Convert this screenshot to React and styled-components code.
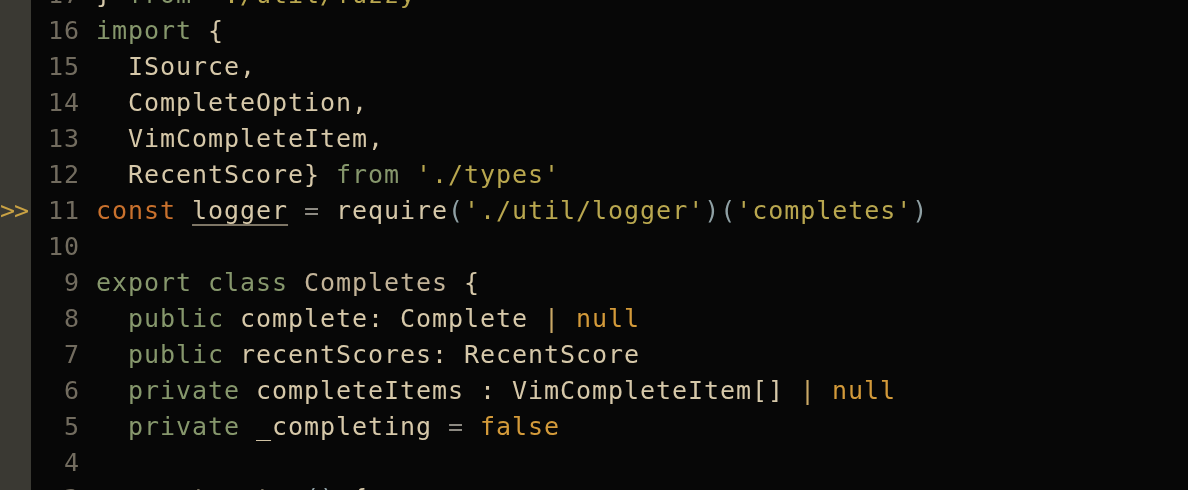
import React from 'react'
import styled, {createGlobalStyle} from 'styled-components'

const GlobalStyle = createGlobalStyle`
  html, body {
    margin: 0;
    padding: 0;
    background: #070707;
  }
  body {
    width: 1188px;
    height: 490px;
    overflow: hidden;
  }
`

const Editor = styled.main`
  display: flex;
  flex-direction: column;
  margin-top: -23px;
  font-family: "DejaVu Sans Mono", "Liberation Mono", monospace;
  font-size: 25px;
  letter-spacing: 0.95px;
  filter: blur(0.45px);
`

const Line = styled.div`
  display: flex;
  flex-direction: row;
  height: 36px;
  line-height: 36px;
`

const SignColumn = styled.div`
  flex: 0 0 31px;
  background: #3a3933;
  color: #c9a244;
  white-space: pre;
  letter-spacing: -1px;
`

const LineNumber = styled.div`
  flex: 0 0 49px;
  padding-right: 16px;
  text-align: right;
  color: #726c5f;
`

const Code = styled.div`
  white-space: pre;
  color: #d6c8a9;
`

const Token = styled.span`
  color: ${({c}) => c};
  ${({underline}) => underline && `
    text-decoration: underline;
    text-decoration-color: #7e7666;
    text-underline-offset: 5px;
  `}
`

const colors = {
  kw: '#86976c',
  id: '#d6c8a9',
  type: '#c2b398',
  str: '#b9a74f',
  storage: '#c9712d',
  op: '#8d8a82',
  paren: '#8fa0a4',
  cons: '#d39a3a',
  bar: '#c9a866',
}

const t = (text, kind = 'id', extra = {}) => ({text, kind, ...extra})

const lines = [
  {nr: 17, parts: [t('}'), t(' '), t('from', 'kw'), t(' '), t("'./util/fuzzy'", 'str')]},
  {nr: 16, parts: [t('import', 'kw'), t(' {')]},
  {nr: 15, parts: [t('  ISource,')]},
  {nr: 14, parts: [t('  CompleteOption,')]},
  {nr: 13, parts: [t('  VimCompleteItem,')]},
  {nr: 12, parts: [t('  RecentScore} '), t('from', 'kw'), t(' '), t("'./types'", 'str')]},
  {nr: 11, sign: '>>', parts: [
    t('const', 'storage'), t(' '), t('logger', 'id', {underline: true}), t(' '), t('=', 'op'), t(' require'),
    t('(', 'paren'), t("'./util/logger'", 'str'), t(')(', 'paren'), t("'completes'", 'str'), t(')', 'paren'),
  ]},
  {nr: 10, parts: []},
  {nr: 9, parts: [t('export', 'kw'), t(' '), t('class', 'kw'), t(' '), t('Completes', 'type'), t(' {')]},
  {nr: 8, parts: [t('  '), t('public', 'kw'), t(' complete: Complete '), t('|', 'bar'), t(' '), t('null', 'cons')]},
  {nr: 7, parts: [t('  '), t('public', 'kw'), t(' recentScores: RecentScore')]},
  {nr: 6, parts: [t('  '), t('private', 'kw'), t(' completeItems : VimCompleteItem[] '), t('|', 'bar'), t(' '), t('null', 'cons')]},
  {nr: 5, parts: [t('  '), t('private', 'kw'), t(' _completing '), t('=', 'op'), t(' '), t('false', 'cons')]},
  {nr: 4, parts: []},
  {nr: 3, parts: [t('  constructor'), t('()', 'paren'), t(' {')]},
]

const App = () => (
  <>
    <GlobalStyle />
    <Editor>
      {lines.map(line => (
        <Line key={line.nr}>
          <SignColumn>{line.sign || ' '}</SignColumn>
          <LineNumber>{line.nr}</LineNumber>
          <Code>
            {line.parts.map((p, i) => (
              <Token key={i} c={colors[p.kind]} underline={p.underline}>{p.text}</Token>
            ))}
          </Code>
        </Line>
      ))}
    </Editor>
  </>
)

export default App
